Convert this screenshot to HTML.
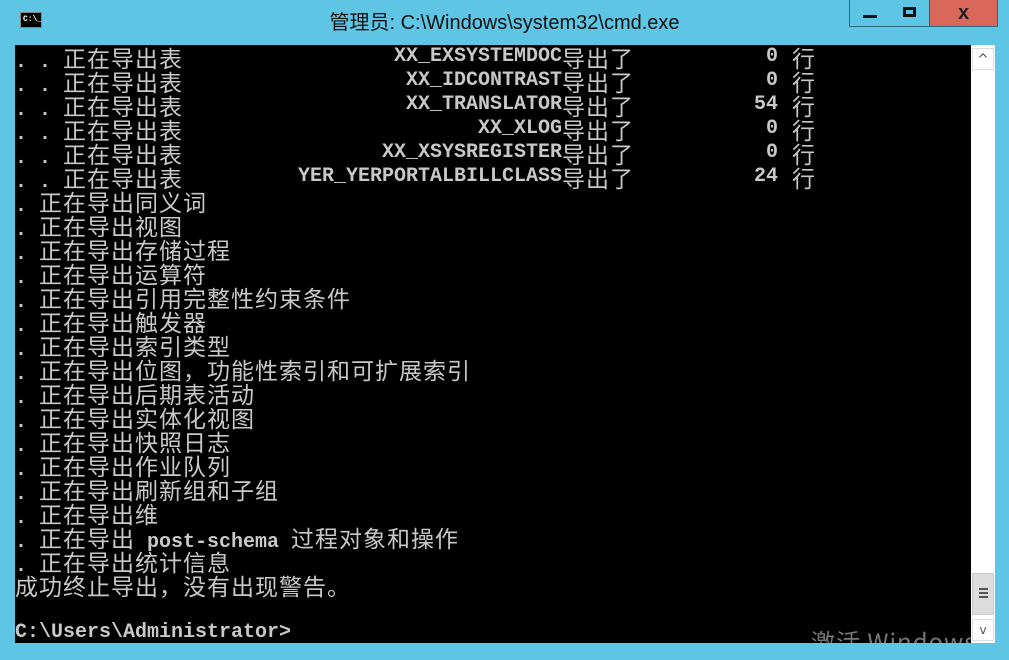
<!DOCTYPE html>
<html><head><meta charset="utf-8"><style>
body{margin:0;width:1009px;height:660px;overflow:hidden;background:#5ec5e4;position:relative;font-family:"Liberation Sans",sans-serif}
#con{position:absolute;left:15px;top:45px;width:956px;height:598px;background:#000;overflow:hidden}
.r{position:absolute;height:24px;line-height:24px;white-space:pre;color:#c8c8c8}
.m{font-family:"Liberation Mono",monospace;font-size:20px;font-weight:bold;letter-spacing:0}
.c{font-family:"WenQuanYi Zen Hei","Noto Sans CJK SC",sans-serif;font-size:23px;letter-spacing:1px}
.title{position:absolute;left:0;width:1009px;top:6px;text-align:center;font-size:20px;color:#111;font-family:"Liberation Sans","Noto Sans CJK SC",sans-serif}
.btn{position:absolute;top:0;height:27px;border:1px solid #2a6a80;border-top:none;box-sizing:border-box}
#sb{position:absolute;left:971px;top:45px;width:24px;height:598px;background:#fff}
</style></head><body>
<div style="position:absolute;left:20px;top:12px;width:22px;height:16px;background:#000;border:1px solid #888;box-sizing:border-box;color:#fff;font:bold 8px 'Liberation Mono',monospace;line-height:14px;padding-left:2px">C:\_</div>
<div class="title">管理员: C:\Windows\system32\cmd.exe</div>
<div class="btn" style="left:849px;width:42px;background:#5ec5e4"><div style="position:absolute;left:13px;top:15px;width:14px;height:3px;background:#111"></div></div>
<div class="btn" style="left:890px;width:40px;background:#5ec5e4;border-left:none"><div style="position:absolute;left:13px;top:7px;width:13px;height:10px;border:3px solid #111;box-sizing:border-box"></div></div>
<div class="btn" style="left:930px;width:68px;background:#d9685a;border-left:none;text-align:center;font:bold 20px 'Liberation Sans';color:#222;line-height:26px">x</div>
<div id="con">
<div class="r" style="top:0"><span class="m">. . </span><span class="c">正在导出表</span></div>
<div class="r" style="top:24px"><span class="m">. . </span><span class="c">正在导出表</span></div>
<div class="r" style="top:48px"><span class="m">. . </span><span class="c">正在导出表</span></div>
<div class="r" style="top:72px"><span class="m">. . </span><span class="c">正在导出表</span></div>
<div class="r" style="top:96px"><span class="m">. . </span><span class="c">正在导出表</span></div>
<div class="r" style="top:120px"><span class="m">. . </span><span class="c">正在导出表</span></div>
<div class="r m" style="top:0;right:409px">XX_EXSYSTEMDOC</div>
<div class="r m" style="top:24px;right:409px">XX_IDCONTRAST</div>
<div class="r m" style="top:48px;right:409px">XX_TRANSLATOR</div>
<div class="r m" style="top:72px;right:409px">XX_XLOG</div>
<div class="r m" style="top:96px;right:409px">XX_XSYSREGISTER</div>
<div class="r m" style="top:120px;right:409px">YER_YERPORTALBILLCLASS</div>
<div class="r c" style="top:0;left:547px">导出了</div><div class="r c" style="top:24px;left:547px">导出了</div><div class="r c" style="top:48px;left:547px">导出了</div><div class="r c" style="top:72px;left:547px">导出了</div><div class="r c" style="top:96px;left:547px">导出了</div><div class="r c" style="top:120px;left:547px">导出了</div>
<div class="r m" style="top:0;right:193px">0</div><div class="r m" style="top:24px;right:193px">0</div><div class="r m" style="top:48px;right:193px">54</div><div class="r m" style="top:72px;right:193px">0</div><div class="r m" style="top:96px;right:193px">0</div><div class="r m" style="top:120px;right:193px">24</div>
<div class="r c" style="top:0;left:777px">行</div><div class="r c" style="top:24px;left:777px">行</div><div class="r c" style="top:48px;left:777px">行</div><div class="r c" style="top:72px;left:777px">行</div><div class="r c" style="top:96px;left:777px">行</div><div class="r c" style="top:120px;left:777px">行</div>
<div class="r" style="top:144px"><span class="m">. </span><span class="c">正在导出同义词</span></div>
<div class="r" style="top:168px"><span class="m">. </span><span class="c">正在导出视图</span></div>
<div class="r" style="top:192px"><span class="m">. </span><span class="c">正在导出存储过程</span></div>
<div class="r" style="top:216px"><span class="m">. </span><span class="c">正在导出运算符</span></div>
<div class="r" style="top:240px"><span class="m">. </span><span class="c">正在导出引用完整性约束条件</span></div>
<div class="r" style="top:264px"><span class="m">. </span><span class="c">正在导出触发器</span></div>
<div class="r" style="top:288px"><span class="m">. </span><span class="c">正在导出索引类型</span></div>
<div class="r" style="top:312px"><span class="m">. </span><span class="c">正在导出位图，功能性索引和可扩展索引</span></div>
<div class="r" style="top:336px"><span class="m">. </span><span class="c">正在导出后期表活动</span></div>
<div class="r" style="top:360px"><span class="m">. </span><span class="c">正在导出实体化视图</span></div>
<div class="r" style="top:384px"><span class="m">. </span><span class="c">正在导出快照日志</span></div>
<div class="r" style="top:408px"><span class="m">. </span><span class="c">正在导出作业队列</span></div>
<div class="r" style="top:432px"><span class="m">. </span><span class="c">正在导出刷新组和子组</span></div>
<div class="r" style="top:456px"><span class="m">. </span><span class="c">正在导出维</span></div>
<div class="r" style="top:480px"><span class="m">. </span><span class="c">正在导出</span><span class="m"> post-schema </span><span class="c">过程对象和操作</span></div>
<div class="r" style="top:504px"><span class="m">. </span><span class="c">正在导出统计信息</span></div>
<div class="r c" style="top:528px">成功终止导出，没有出现警告。</div>
<div class="r m" style="top:576px">C:\Users\Administrator&gt;</div>
<div class="r c" style="top:584px;left:796px;color:#777;font-size:24px">激活 Windows</div>
</div>
<div id="sb">
<div style="position:absolute;left:1px;top:3px;width:22px;height:22px;background:#fff;border:1px solid #ddd;box-sizing:border-box;text-align:center;font:14px 'DejaVu Sans';color:#555;line-height:22px">^</div>
<div style="position:absolute;left:1px;top:528px;width:22px;height:42px;background:#dcdcdc;border:1px solid #ccc;box-sizing:border-box"><div style="position:absolute;left:6px;top:14px;width:9px;height:2px;background:#555;box-shadow:0 4px #555,0 8px #555"></div></div>
<div style="position:absolute;left:1px;top:574px;width:22px;height:22px;background:#fff;border:1px solid #ddd;box-sizing:border-box;text-align:center;font:12px 'DejaVu Sans';color:#555;line-height:20px">v</div>
</div>
</body></html>
